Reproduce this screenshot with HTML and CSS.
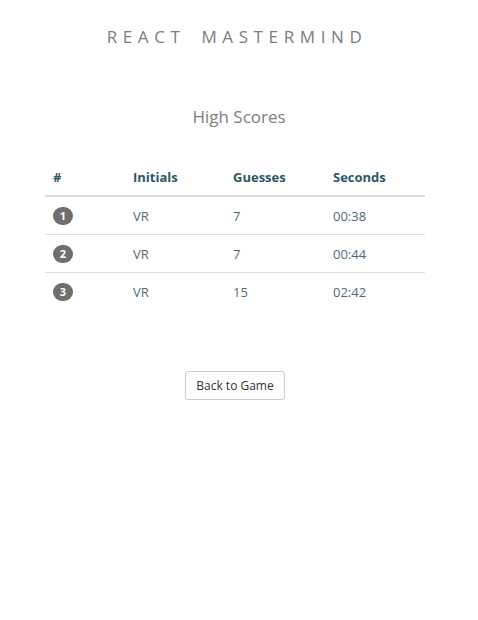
FILE: index.html
```html
<!DOCTYPE html>
<html>
<head>
<meta charset="utf-8">
<link rel="stylesheet" href="styles.css">
</head>
<body>
<header class="app-header">REACT MASTERMIND</header>
<main class="scores">
  <h2 class="scores-title">High Scores</h2>
  <table class="score-table">
    <thead>
      <tr><th class="col-rank">#</th><th class="col-init">Initials</th><th class="col-guess">Guesses</th><th>Seconds</th></tr>
    </thead>
    <tbody>
      <tr><td><span class="badge">1</span></td><td>VR</td><td>7</td><td>00:38</td></tr>
      <tr><td><span class="badge">2</span></td><td>VR</td><td>7</td><td>00:44</td></tr>
      <tr><td><span class="badge">3</span></td><td>VR</td><td>15</td><td>02:42</td></tr>
    </tbody>
  </table>
  <div class="actions"><button class="btn">Back to Game</button></div>
</main>
</body>
</html>
```
FILE: styles.css
```css
html, body {
  margin: 0;
  padding: 0;
  background: #fff;
}
body {
  font-family: "Open Sans", "Segoe UI", sans-serif;
  color: #4f6b78;
  width: 478px;
}
.app-header {
  text-align: center;
  font-size: 17px;
  line-height: 24px;
  letter-spacing: 0.33em;
  word-spacing: 0.35em;
  color: #7d7d7d;
  padding-top: 25px;
  padding-right: 4px;
}
.scores {
  display: flex;
  flex-direction: column;
  align-items: center;
}
.scores-title {
  font-size: 17px;
  font-weight: 400;
  color: #808080;
  margin: 56px 0 0 0;
  line-height: 24px;
}
.score-table {
  margin-top: 30px;
  margin-left: -8px;
  width: 380px;
  border-collapse: collapse;
  font-size: 13px;
}
.score-table th {
  text-align: left;
  color: #2b5766;
  font-weight: 700;
  padding: 8px 8px 8px;
  line-height: 20px;
  border-bottom: 2px solid #dddddd;
}
.score-table td {
  padding: 9px 8px 8px;
  line-height: 20px;
  border-top: 1px solid #dddddd;
}
.score-table tbody tr:first-child td {
  border-top: 0;
}
.col-rank { width: 64px; }
.col-init { width: 84px; }
.col-guess { width: 84px; }
.badge {
  display: inline-block;
  min-width: 20px;
  height: 18px;
  box-sizing: border-box;
  padding: 0 6px;
  margin-top: 1px;
  border-radius: 9px;
  background: #6e6e6e;
  color: #fff;
  font-size: 11px;
  font-weight: 700;
  line-height: 18px;
  text-align: center;
  vertical-align: top;
}
.actions {
  margin-top: 61px;
  margin-left: -8px;
}
.btn {
  font-family: "Open Sans", "Segoe UI", sans-serif;
  font-size: 12px;
  color: #333;
  background: #fff;
  border: 1px solid #cccccc;
  border-radius: 3px;
  height: 29px;
  width: 100px;
  padding: 0;
}
```
